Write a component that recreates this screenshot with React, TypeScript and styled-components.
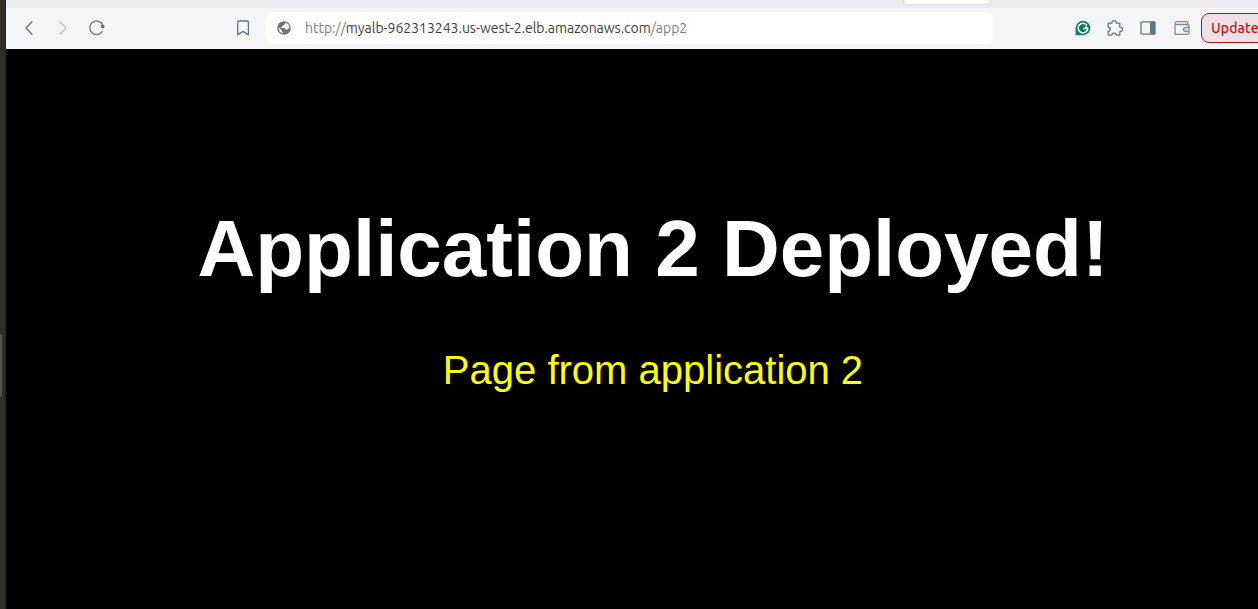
import React from 'react';
import styled, { createGlobalStyle } from 'styled-components';

const GlobalStyle = createGlobalStyle`
  * { box-sizing: border-box; }
  html, body { margin: 0; overflow: hidden; background: #000; }
`;

const Screen = styled.div`
  display: flex;
  width: 100vw;
  height: 100vh;
  overflow: hidden;
`;

const DesktopEdge = styled.div`
  flex: 0 0 6px;
  display: flex;
  align-items: flex-start;
  padding-top: 334px;
  background: #302c2c;
  border-right: 1px solid #292525;
`;

const EdgeHandle = styled.div`
  width: 2px;
  height: 63px;
  border-radius: 0 2px 2px 0;
  background: #555250;
`;

const BrowserWindow = styled.div`
  flex: 1;
  min-width: 0;
  display: flex;
  flex-direction: column;
`;

const TabStrip = styled.div`
  flex: 0 0 8px;
  display: flex;
  padding-left: 898px;
  background: #ebeaef;
`;

const ActiveTab = styled.div`
  width: 85px;
  height: 4px;
  border-radius: 0 0 8px 8px;
  background: #fff;
  box-shadow: 0 0 3px rgba(60, 60, 90, 0.14);
`;

const Toolbar = styled.div`
  flex: 0 0 41px;
  display: flex;
  align-items: center;
  padding: 0 0 1px 13px;
  background: #f3f5f7;
  overflow: hidden;
`;

const IconButton = styled.button<{ $gap?: number; $color?: string }>`
  flex: 0 0 20px;
  display: flex;
  width: 20px;
  height: 20px;
  margin: 0 ${({ $gap }) => $gap ?? 0}px 0 0;
  padding: 0;
  border: 0;
  background: none;
  color: ${({ $color }) => $color ?? '#62757e'};

  svg { display: block; overflow: visible; }
`;

const AddressBar = styled.div`
  flex: 0 0 727px;
  display: flex;
  align-items: center;
  height: 32px;
  margin-right: 80px;
  padding-left: 8px;
  border-radius: 8px;
  background: #fff;
`;

const Url = styled.div`
  margin-left: 11px;
  color: #808080;
  font: 14px/20px Ubuntu, 'Noto Sans', sans-serif;
  letter-spacing: -0.022px;
  white-space: nowrap;
`;

const Host = styled.span`
  color: #3d3d3d;
`;

const UpdateButton = styled.button`
  flex: 0 0 90px;
  height: 30px;
  padding: 0 0 0 9px;
  border: 1px solid #b90d15;
  border-radius: 8px;
  background: #efe0e3;
  color: #bd1218;
  font: 500 14px/20px Ubuntu, 'Noto Sans', sans-serif;
  letter-spacing: 0.1px;
  text-align: left;
`;

const Page = styled.main`
  flex: 1;
  width: calc(100% + 42px);
  padding-top: 154px;
  background: #000;
  font-family: 'Liberation Sans', Arial, sans-serif;
  text-align: center;
`;

const Title = styled.h1`
  margin: 0;
  color: #fff;
  font-size: 80px;
  line-height: 92px;
`;

const Message = styled.p`
  margin: 52px 0 0;
  color: #ff0;
  font-size: 40px;
  line-height: 46px;
`;

const Icon = ({ children }: { children: React.ReactNode }) => (
  <svg width="20" height="20" viewBox="0 0 20 20" fill="none" stroke="currentColor" strokeWidth="1.3" strokeLinecap="round" strokeLinejoin="round">
    {children}
  </svg>
);

export default function App() {
  return (
    <Screen>
      <GlobalStyle />
      <DesktopEdge><EdgeHandle /></DesktopEdge>
      <BrowserWindow>
        <TabStrip><ActiveTab /></TabStrip>
        <Toolbar>
          <IconButton $gap={14} aria-label="Back">
            <Icon><path d="M13 3.7 7 10l6 6.3" /></Icon>
          </IconButton>
          <IconButton $gap={14} $color="#bcc3c9" aria-label="Forward">
            <Icon><path d="m7 3.7 6.3 6.3L7 16.3" /></Icon>
          </IconButton>
          <IconButton $gap={126} aria-label="Reload">
            <Icon>
              <path d="M15.3 6.1A6.8 6.8 0 1 0 15.1 13.7" />
              <circle cx="15.6" cy="8.5" r="1.9" fill="currentColor" stroke="none" />
            </Icon>
          </IconButton>
          <IconButton $gap={13} aria-label="Bookmark">
            <Icon><path d="M4.7 16.9V4.2q0-1.2 1.2-1.2h8.3q1.2 0 1.2 1.2v12.7L10 13.4Z" /></Icon>
          </IconButton>
          <AddressBar>
            <IconButton $color="#737373" aria-label="Site information">
              <Icon>
                <circle cx="10" cy="10" r="6.8" fill="currentColor" stroke="none" />
                <path d="M11.4 4.8 11 6.6 8.8 7.3l-.3 1.5-1.7.4.2.9h3.5l1.2 1.5h1.1q1.2-.2 1.3-1.2l1.3-.1A5.4 5.4 0 0 0 11.4 4.8ZM4.6 9.3l3.1 3v1.2l1.3 1v.8A5.5 5.5 0 0 1 4.6 9.3Z" fill="#fff" stroke="none" />
              </Icon>
            </IconButton>
            <Url>http://<Host>myalb-962313243.us-west-2.elb.amazonaws.com</Host>/app2</Url>
          </AddressBar>
          <IconButton $gap={12} $color="#087e66" aria-label="Grammarly">
            <Icon>
              <path d="M2.6 17.2V10a7.4 7.2 0 1 1 7.4 7.2Z" fill="currentColor" stroke="none" />
              <path d="M13.7 7A4.8 4.8 0 1 0 14.7 10.4h-3.8m1.8-1.6 2 1.6-.3 2.2" stroke="#fff" strokeWidth="1.5" />
            </Icon>
          </IconButton>
          <IconButton $gap={13} aria-label="Extensions">
            <Icon><path d="M3.2 5.2h3.7c-.4-3.4 4.8-3.4 4.4 0h3.5v4c3.6-.2 3.6 4.5 0 4.4v3.5h-3.5c0-2.6-4.4-2.6-4.4 0H3.2v-3.7c2.7 0 2.7-4.1 0-4.1Z" /></Icon>
          </IconButton>
          <IconButton $gap={14} aria-label="Sidebar">
            <Icon>
              <rect x="3" y="3.8" width="14" height="12.4" rx=".8" />
              <path d="M12 4h5v12h-5Z" fill="currentColor" stroke="none" />
            </Icon>
          </IconButton>
          <IconButton $gap={9} $color="#7c8b93" aria-label="Wallet">
            <Icon>
              <path d="M3 5.6q0-1.9 1.6-1.9h9.8q1.4 0 1.4 1.3v1M3 6.5h12.4q1.6 0 1.6 1.5v6.8q0 1.6-1.6 1.6H4.6Q3 16.4 3 14.8V5.6M17 9.4h-3.3a2.1 2.1 0 0 0 0 4.2H17M14 11.5h.3" />
            </Icon>
          </IconButton>
          <UpdateButton>Update</UpdateButton>
        </Toolbar>
        <Page>
          <Title>Application 2 Deployed!</Title>
          <Message>Page from application 2</Message>
        </Page>
      </BrowserWindow>
    </Screen>
  );
}
